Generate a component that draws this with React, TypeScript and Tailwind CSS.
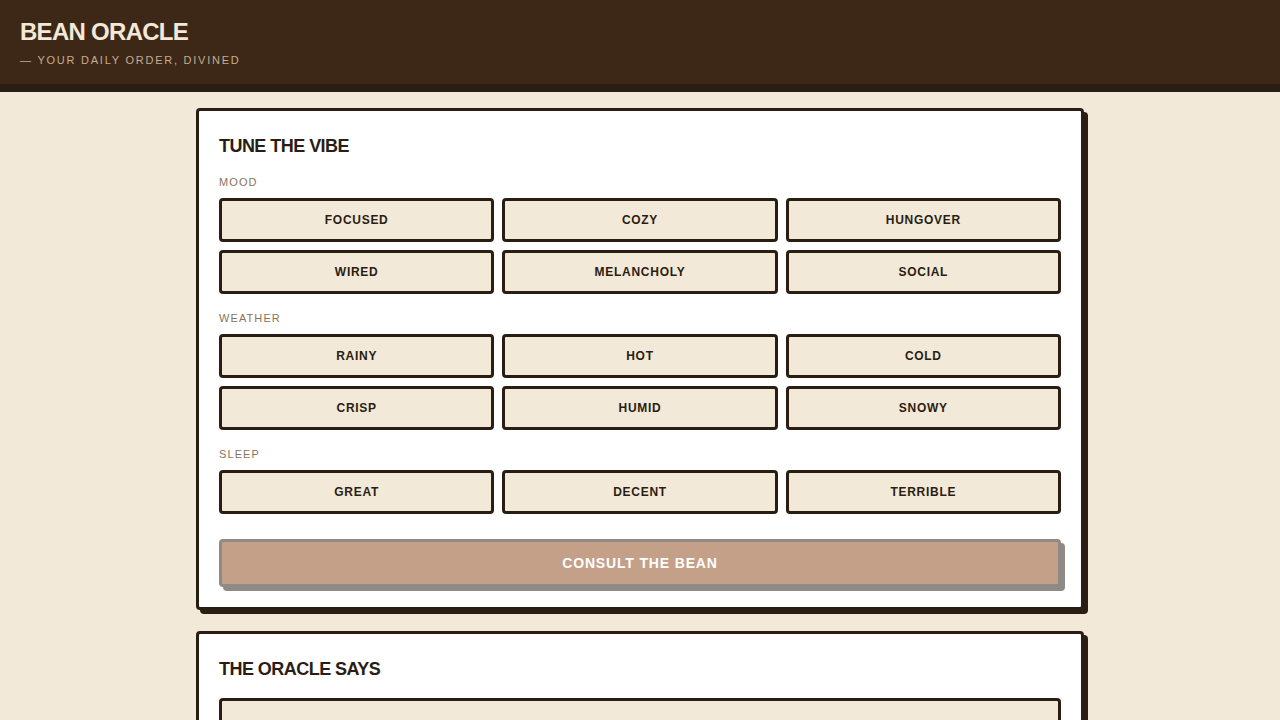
const moods = ['Focused', 'Cozy', 'Hungover', 'Wired', 'Melancholy', 'Social'];
const weathers = ['Rainy', 'Hot', 'Cold', 'Crisp', 'Humid', 'Snowy'];
const sleeps = ['Great', 'Decent', 'Terrible'];

function OptionGroup({ label, options }: { label: string; options: string[] }) {
  return (
    <div>
      <div className="mb-[10px] text-[11px] leading-[12px] uppercase tracking-[0.1em] text-[#8a735c]">{label}</div>
      <div className="grid grid-cols-3 gap-2">
        {options.map((o) => (
          <button
            key={o}
            className="h-11 rounded-[4px] border-[3px] border-[#2a1d12] bg-[#f2e9d8] text-[12px] font-bold uppercase tracking-[0.06em] text-[#2a1d12]"
          >
            {o}
          </button>
        ))}
      </div>
    </div>
  );
}

export default function App() {
  return (
    <div className="min-h-screen bg-[#f2e9d8] font-['Liberation_Sans',Arial,sans-serif] text-[#2a1d12]">
      <header className="border-b-8 border-[#2a1d12] bg-[#3d2817] px-5 pt-[18px] pb-[17px]">
        <h1 className="text-[24px] leading-[28px] font-bold tracking-[-0.03em] text-[#f2e9d8]">BEAN ORACLE</h1>
        <div className="mt-2 text-[11px] leading-[13px] uppercase tracking-[0.16em] text-[#c4ad90]">— Your daily order, divined</div>
      </header>

      <main className="mx-auto mt-4 flex w-[888px] flex-col gap-[21px]">
        <section className="rounded-[4px] border-[3px] border-[#2a1d12] bg-white p-5 shadow-[4px_4px_0_#2a1d12]">
          <h2 className="mt-px mb-4 text-[18px] leading-[28px] font-bold tracking-[-0.03em]">TUNE THE VIBE</h2>
          <div className="flex flex-col gap-[18px]">
            <OptionGroup label="Mood" options={moods} />
            <OptionGroup label="Weather" options={weathers} />
            <OptionGroup label="Sleep" options={sleeps} />
          </div>
          <button className="mt-[25px] h-12 w-full rounded-[4px] border-[3px] border-[#8f8a85] bg-[#c4a088] text-[14px] font-bold uppercase tracking-[0.06em] text-white shadow-[4px_4px_0_#8f8a85]">
            Consult the Bean
          </button>
        </section>

        <section className="rounded-[4px] border-[3px] border-[#2a1d12] bg-white p-5 shadow-[4px_4px_0_#2a1d12]">
          <h2 className="mt-px mb-[15px] text-[18px] leading-[28px] font-bold tracking-[-0.03em]">THE ORACLE SAYS</h2>
          <div className="h-24 rounded-[4px] border-[3px] border-[#2a1d12] bg-[#f2e9d8]" />
        </section>
      </main>
    </div>
  );
}
